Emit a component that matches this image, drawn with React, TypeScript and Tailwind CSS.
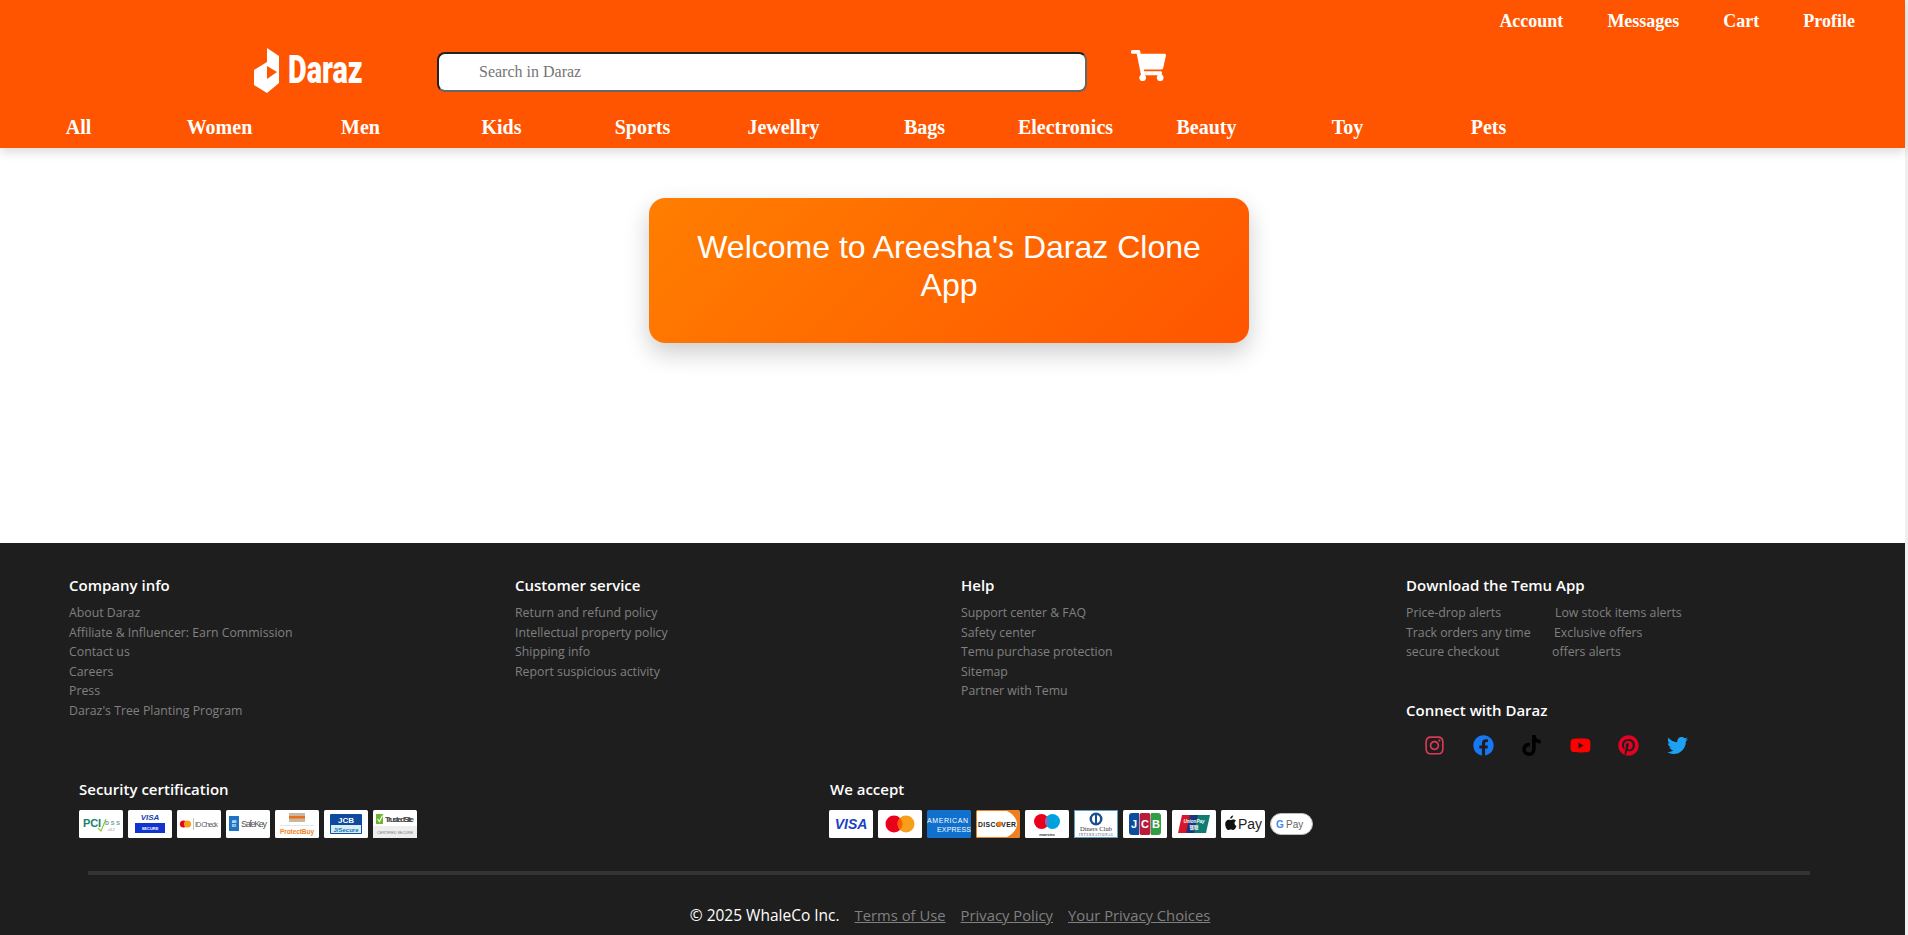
import { FaFacebook, FaInstagram, FaPinterest, FaShoppingCart, FaTiktok, FaTwitter, FaYoutube } from "react-icons/fa";

const topLinks = ["Account", "Messages", "Cart", "Profile"];
const navLinks = ["All", "Women", "Men", "Kids", "Sports", "Jewellry", "Bags", "Electronics", "Beauty", "Toy", "Pets"];

const footerColumns = [
  {
    title: "Company info",
    width: "w-[446px]",
    links: ["About Daraz", "Affiliate & Influencer: Earn Commission", "Contact us", "Careers", "Press", "Daraz's Tree Planting Program"],
  },
  {
    title: "Customer service",
    width: "w-[446px]",
    links: ["Return and refund policy", "Intellectual property policy", "Shipping info", "Report suspicious activity"],
  },
  {
    title: "Help",
    width: "w-[445px]",
    links: ["Support center & FAQ", "Safety center", "Temu purchase protection", "Sitemap", "Partner with Temu"],
  },
];

const appRows = [
  ["Price-drop alerts", "Low stock items alerts", "w-[149px]"],
  ["Track orders any time", "Exclusive offers", "w-[148px]"],
  ["secure checkout", "offers alerts", "w-[146px]"],
];

const Card = ({ children }: { children: React.ReactNode }) => (
  <svg width="44" height="28" viewBox="0 0 44 28" className="shrink-0">
    <rect width="44" height="28" rx="1.5" fill="#fff" />
    {children}
  </svg>
);

const securityBadges = [
  <Card key="pci">
    <text x="4" y="17" fontSize="11" fontWeight="700" fill="#17806f" fontFamily="Liberation Sans" textLength="18">PCI</text>
    <path d="M19 18l3 3 5-12" stroke="#8ec63f" strokeWidth="1.2" fill="none" />
    <text x="26" y="15" fontSize="5.5" fontWeight="700" fill="#5a9a90" fontFamily="Liberation Sans" textLength="15">DSS</text>
    <text x="29" y="21" fontSize="3.5" fill="#888" fontFamily="Liberation Sans">v3.2</text>
  </Card>,
  <Card key="visa">
    <text x="22" y="9.5" fontSize="8" fontWeight="700" fontStyle="italic" textAnchor="middle" fill="#1a3fae" fontFamily="Liberation Sans">VISA</text>
    <rect x="7" y="13" width="30" height="10" fill="#0f34d0" />
    <text x="22" y="20" fontSize="4" fontWeight="700" textAnchor="middle" fill="#fff" fontFamily="Liberation Sans">SECURE</text>
  </Card>,
  <Card key="idcheck">
    <circle cx="6.5" cy="14" r="3.6" fill="#e8001c" />
    <circle cx="10.5" cy="14" r="3.6" fill="#f79e1b" />
    <rect x="16" y="8" width="0.5" height="12" fill="#888" />
    <text x="18" y="17" fontSize="7.5" fill="#666" fontFamily="Liberation Sans" textLength="23">ID Check</text>
  </Card>,
  <Card key="safekey">
    <rect x="3" y="6" width="10" height="15" fill="#1d74c4" />
    <text x="8" y="13" fontSize="3" fontWeight="700" textAnchor="middle" fill="#fff" fontFamily="Liberation Sans">AM</text>
    <text x="8" y="17" fontSize="3" fontWeight="700" textAnchor="middle" fill="#fff" fontFamily="Liberation Sans">EX</text>
    <text x="15" y="17" fontSize="9" fill="#555" fontFamily="Liberation Sans" textLength="26">SafeKey</text>
  </Card>,
  <Card key="protect">
    <rect x="14" y="3" width="16" height="9" fill="#c9b79f" />
    <rect x="14" y="6" width="16" height="2.5" fill="#e8701a" />
    <rect x="5" y="15" width="34" height="0.5" fill="#ccc" />
    <text x="5" y="24" fontSize="6.5" fontWeight="700" fill="#f07f1d" fontFamily="Liberation Sans" textLength="34">ProtectBuy</text>
  </Card>,
  <Card key="jsecure">
    <rect x="6" y="4" width="32" height="20" rx="1" fill="#0e4a9e" />
    <text x="22" y="13" fontSize="8" fontWeight="700" textAnchor="middle" fill="#fff" fontFamily="Liberation Sans">JCB</text>
    <rect x="7" y="15" width="30" height="8" fill="#d8eef5" />
    <text x="22" y="21.5" fontSize="6" fontWeight="700" textAnchor="middle" fill="#1272b8" fontFamily="Liberation Sans">J/Secure</text>
  </Card>,
  <Card key="trusted">
    <rect x="3" y="4" width="7" height="10" fill="#6cb52d" />
    <path d="M4.500 9l2 2.500 3-6" stroke="#fff" strokeWidth="1.2" fill="none" />
    <text x="12" y="12" fontSize="8" fontWeight="700" fill="#444" fontFamily="Liberation Sans" textLength="29">TrustedSite</text>
    <rect x="0" y="16" width="44" height="12" fill="#eee" />
    <text x="22" y="23.5" fontSize="3.8" textAnchor="middle" fill="#777" fontFamily="Liberation Sans" textLength="36">CERTIFIED SECURE</text>
  </Card>,
];

const payBadges = [
  <Card key="visa">
    <text x="22" y="19" fontSize="14" fontWeight="700" fontStyle="italic" textAnchor="middle" fill="#1a3fc4" fontFamily="Liberation Sans">VISA</text>
  </Card>,
  <Card key="mc">
    <circle cx="16" cy="14" r="8.500" fill="#eb001b" />
    <circle cx="28" cy="14" r="8.500" fill="#f79e1b" />
    <path d="M22 8a8.500 8.500 0 0 1 0 12a8.500 8.500 0 0 1 0-12z" fill="#ff5f00" />
  </Card>,
  <svg key="amex" width="44" height="28" viewBox="0 0 44 28" className="shrink-0">
    <rect width="44" height="28" rx="1.5" fill="#0f70ce" />
    <text x="0" y="13" fontSize="7" fill="#fff" fontFamily="Liberation Sans" textLength="41">AMERICAN</text>
    <text x="10" y="22" fontSize="7" fill="#fff" fontFamily="Liberation Sans" textLength="34">EXPRESS</text>
  </svg>,
  <svg key="discover" width="44" height="28" viewBox="0 0 44 28" className="shrink-0">
    <rect width="44" height="28" rx="1.5" fill="#ee7f22" />
    <path d="M1 1h30c6 3 10 8 10 13s-4 10-10 13H1z" fill="#fff" />
    <text x="2" y="16.500" fontSize="6.800" fontWeight="700" fill="#222" fontFamily="Liberation Sans" textLength="38">DISCOVER</text>
    <circle cx="23.500" cy="14" r="2.600" fill="#ee7f22" />
  </svg>,
  <Card key="maestro">
    <circle cx="16.500" cy="11.500" r="7.500" fill="#eb001b" />
    <circle cx="27.500" cy="11.500" r="7.500" fill="#00a1df" />
    <path d="M22 6.500a7.500 7.500 0 0 1 0 10a7.500 7.500 0 0 1 0-10z" fill="#7674b8" />
    <text x="22" y="25.500" fontSize="4" fontWeight="700" textAnchor="middle" fill="#333" fontFamily="Liberation Sans">maestro</text>
  </Card>,
  <Card key="diners">
    <rect x="0.5" y="0.5" width="43" height="27" fill="none" stroke="#5da3c9" />
    <circle cx="22" cy="9" r="6.500" fill="#1d4f8f" />
    <circle cx="22" cy="9" r="4" fill="#fff" />
    <rect x="21" y="5" width="2" height="8" fill="#1d4f8f" />
    <text x="22" y="21" fontSize="6.500" textAnchor="middle" fill="#333" fontFamily="Liberation Serif" textLength="32">Diners Club</text>
    <text x="22" y="25.500" fontSize="3" textAnchor="middle" fill="#333" fontFamily="Liberation Serif" textLength="34">INTERNATIONAL</text>
  </Card>,
  <Card key="jcb">
    <path d="M6 6a3 3 0 0 1 3-3h7v22H9a3 3 0 0 1-3-3z" fill="#0e4c9e" />
    <rect x="16.500" y="3" width="11" height="22" rx="2" fill="#b81c3c" />
    <path d="M28 3h7a3 3 0 0 1 3 3v16a3 3 0 0 1-3 3h-7z" fill="#2f9e44" />
    <text x="11" y="18" fontSize="11" fontWeight="700" textAnchor="middle" fill="#fff" fontFamily="Liberation Sans">J</text>
    <text x="22" y="18" fontSize="11" fontWeight="700" textAnchor="middle" fill="#fff" fontFamily="Liberation Sans">C</text>
    <text x="33" y="18" fontSize="11" fontWeight="700" textAnchor="middle" fill="#fff" fontFamily="Liberation Sans">B</text>
  </Card>,
  <Card key="union">
    <path d="M10 5h10l-4 18H6z" fill="#d9152c" />
    <path d="M18 5h10l-4 18H14z" fill="#17387c" />
    <path d="M26 5h12l-4 18H22z" fill="#0f7c74" />
    <text x="22" y="13" fontSize="4.600" fontWeight="700" fontStyle="italic" textAnchor="middle" fill="#fff" fontFamily="Liberation Sans">UnionPay</text>
    <text x="22" y="19" fontSize="4.500" fontWeight="700" textAnchor="middle" fill="#fff" fontFamily="Noto Sans CJK SC">银联</text>
  </Card>,
  <Card key="apple">
    <path d="M9.500 10c1 0 1.800-.6 2.800-.6 1.100 0 2.100.5 2.700 1.400-2.200 1.300-1.800 4.400.5 5.300-.6 1.700-1.900 4-3.200 4-1 0-1.300-.6-2.500-.6s-1.500.6-2.400.6C6 20 4.200 16.800 4.200 14.200c0-2.800 1.800-4.400 3.300-4.400.8 0 1.400.2 2 .2zM12 5.500c.1 1.700-1.300 3.300-2.700 3.200-.2-1.500 1.300-3.100 2.700-3.200z" fill="#111" />
    <text x="17" y="19" fontSize="14" fill="#222" fontFamily="Liberation Sans">Pay</text>
  </Card>,
];

const App = () => {
  return (
    <div className="h-[935px] overflow-hidden flex">
      <div className="w-[1905px] shrink-0 bg-white font-['Liberation_Serif',serif]">
        <header className="h-[148px] bg-[#ff5500] shadow-[0_4px_10px_rgba(0,0,0,0.15)] relative">
          <div className="h-[43px] flex items-center justify-end gap-[44px] pr-[50px]">
            {topLinks.map((link) => (
              <a key={link} className="text-[18px] font-bold text-white">
                {link}
              </a>
            ))}
          </div>

          <div className="h-[60px] flex items-start pl-[254px]">
            <div className="w-[107px] h-[45px] mt-[5px] flex items-center gap-[9px]">
              <svg width="25" height="45" viewBox="0 0 25 45" className="shrink-0">
                <path d="M13 0l12 8v27l-12 10L0 37V22l13-8z" fill="#fff" />
                <path d="M13 18l10 6-10 7z" fill="#ff5500" />
              </svg>
              <span className="block w-[74px] text-[39px] leading-none font-black text-white font-['Roboto',sans-serif] origin-left scale-x-[0.74]">
                Daraz
              </span>
            </div>
            <input
              placeholder="Search in Daraz"
              className="ml-[76px] mt-[9px] w-[650px] h-[40px] rounded-lg bg-white pl-[40px] text-[16px] text-black border-2 border-t-[#222] border-l-[#222] border-r-[#666] border-b-[#666] placeholder:text-[#757575]"
            />
            <div className="ml-[44px] mt-[5px] text-white">
              <FaShoppingCart size={35} />
            </div>
          </div>

          <nav className="h-[45px] pt-[2px] flex items-center pl-[8px]">
            {navLinks.map((link) => (
              <a key={link} className="w-[141px] text-center text-[20px] font-bold text-white">
                {link}
              </a>
            ))}
          </nav>
        </header>

        <main className="h-[395px] pt-[50px] pr-[7px] flex justify-center">
          <div className="w-[600px] h-[145px] pb-[10px] rounded-2xl bg-[linear-gradient(135deg,#ff7e00,#ff5500)] shadow-[0_10px_25px_rgba(0,0,0,0.2)] flex items-center justify-center px-[30px]">
            <h1 className="text-center text-[32px] leading-[38px] text-white font-['Liberation_Sans',sans-serif]">
              Welcome to Areesha's Daraz Clone App
            </h1>
          </div>
        </main>

        <footer className="h-[392px] bg-[#1e1e1e] font-['Open_Sans',sans-serif] overflow-hidden">
          <div className="h-[220px] pt-[31px] pl-[69px] flex">
            {footerColumns.map((col) => (
              <div key={col.title} className={col.width}>
                <h3 className="text-[15px] leading-[22px] font-semibold text-white mb-[7px]">{col.title}</h3>
                <ul>
                  {col.links.map((link) => (
                    <li key={link} className="text-[12.3px] leading-[19.5px] text-[#808080]">
                      {link}
                    </li>
                  ))}
                </ul>
              </div>
            ))}

            <div className="w-[400px]">
              <h3 className="text-[15px] leading-[22px] font-semibold text-white mb-[7px]">Download the Temu App</h3>
              {appRows.map(([left, right, w]) => (
                <div key={left} className="flex text-[12.3px] leading-[19.5px] text-[#808080]">
                  <span className={w}>{left}</span>
                  <span>{right}</span>
                </div>
              ))}
              <h3 className="mt-[37px] text-[15px] leading-[22px] font-semibold text-white">Connect with Daraz</h3>
              <div className="mt-[14px] ml-[18px] flex items-center gap-[27.5px] text-[21px]">
                <FaInstagram className="text-[#d93a56]" />
                <FaFacebook className="text-[#1877f2]" />
                <FaTiktok className="text-black" />
                <FaYoutube className="text-[#ff0000]" />
                <FaPinterest className="text-[#e60023]" />
                <FaTwitter className="text-[#1da1f2]" />
              </div>
            </div>
          </div>

          <div className="mt-[15px] pl-[79px] flex">
            <div className="w-[750px]">
              <h3 className="text-[15px] leading-[22px] font-semibold text-white mb-[10px]">Security certification</h3>
              <div className="flex gap-[5px]">{securityBadges}</div>
            </div>
            <div>
              <h3 className="pl-[1px] text-[15px] leading-[22px] font-semibold text-white mb-[10px]">We accept</h3>
              <div className="flex items-center gap-[5px]">
                {payBadges}
                <svg width="43" height="22" viewBox="0 0 43 22" className="shrink-0">
                  <rect x="0.5" y="0.5" width="42" height="21" rx="10.5" fill="#fff" stroke="#bbb" />
                  <text x="6" y="15" fontSize="10" fontWeight="700" fill="#4285f4" fontFamily="Liberation Sans">G</text>
                  <text x="16" y="15" fontSize="10" fill="#5f6368" fontFamily="Liberation Sans">Pay</text>
                </svg>
              </div>
            </div>
          </div>

          <div className="mt-[33px] ml-[88px] w-[1722px] h-[4px] bg-[#333333]" />

          <div className="mt-[30px] flex justify-center items-baseline gap-[15px] pr-[5px] text-[14.8px] leading-5">
            <span className="text-white text-[15.5px]">© 2025 WhaleCo Inc.</span>
            <a className="text-[#808080] underline">Terms of Use</a>
            <a className="text-[#808080] underline">Privacy Policy</a>
            <a className="text-[#808080] underline">Your Privacy Choices</a>
          </div>
        </footer>
      </div>
      <div className="w-[3px] bg-[#f0f0f0]" />
    </div>
  );
};

export default App;
